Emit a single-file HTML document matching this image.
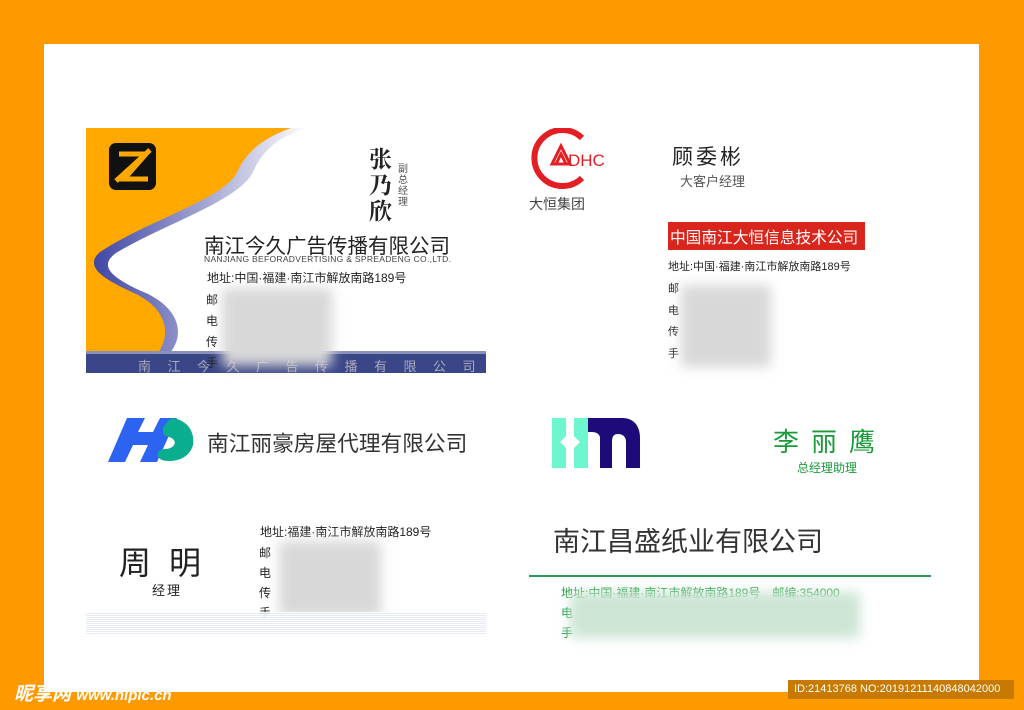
<!DOCTYPE html>
<html><head><meta charset="utf-8"><style>
*{margin:0;padding:0;box-sizing:border-box}
body{width:1024px;height:710px;background:#ff9900;position:relative;overflow:hidden;font-family:"Liberation Sans","Noto Sans CJK SC",sans-serif;color:#222}
.a{position:absolute;white-space:nowrap}
.blur{position:absolute;background:#d8d8d8;filter:blur(6px)}
</style></head><body>
<div class="a" style="left:44px;top:44px;width:935px;height:648px;background:#fff"></div>

<!-- card 1 -->
<svg class="a" style="left:86px;top:128px" width="400" height="245" viewBox="0 0 400 245">
<defs><linearGradient id="g" x1="0" x2="1"><stop offset="0" stop-color="#3a40a0"/><stop offset="1" stop-color="#fff"/></linearGradient></defs>
<path d="M0 0H222C195 8 178 20 168 42C156 72 80 95 30 125C12 138 25 150 60 165C92 180 100 205 84 225L0 225Z" fill="url(#g)"/>
<path d="M0 0H205C178 10 162 22 152 42C142 70 62 92 14 124C-2 138 15 150 48 165C80 180 86 205 72 225L0 225Z" fill="#ffa800"/>
<rect x="23" y="15" width="47" height="47" rx="7" fill="#111"/>
<path d="M33 26H60L38 51H62M30 53L64 22" stroke="#ffa800" stroke-width="5" fill="none"/>
<rect x="0" y="225" width="400" height="20" fill="#3a4688"/>
<rect x="0" y="223" width="400" height="3" fill="#8a90b8"/>
</svg>
<div class="a" style="left:138px;top:356px;font-size:13px;color:#aab;letter-spacing:16.5px">南江今久广告传播有限公司</div>
<div class="a" style="left:369px;top:145px;font-size:23px;font-family:'Noto Serif CJK SC',serif;font-weight:bold;line-height:26px;width:26px;white-space:normal">张乃欣</div>
<div class="a" style="left:398px;top:164px;font-size:10px;color:#555;line-height:11px;width:11px;white-space:normal">副总经理</div>
<div class="a" style="left:204px;top:229px;font-size:20.5px">南江今久广告传播有限公司</div>
<div class="a" style="left:204px;top:254px;font-size:8.5px;color:#444;letter-spacing:0.3px">NANJIANG BEFORADVERTISING &amp; SPREADENG CO.,LTD.</div>
<div class="a" style="left:207px;top:269px;font-size:12px">地址:中国·福建·南江市解放南路189号</div>
<div class="a" style="left:206px;top:290px;font-size:12px;line-height:21px;white-space:normal;width:20px">邮电传手</div>
<div class="blur" style="left:222px;top:288px;width:110px;height:78px"></div>

<!-- card 2 -->
<svg class="a" style="left:530px;top:128px" width="80" height="62" viewBox="0 0 80 62">
<path d="M52 10A28 28 0 1 0 52 50" stroke="#e31e24" stroke-width="6" fill="none"/>
<path d="M22 36L31 18L40 36Z M26 36L31 26L36 36" stroke="#e31e24" stroke-width="3" fill="none"/>
<text x="38" y="38" font-size="17" fill="#e31e24" font-family="Liberation Sans">DHC</text>
</svg>
<div class="a" style="left:529px;top:194px;font-size:14px;color:#444">大恒集团</div>
<div class="a" style="left:672px;top:141px;font-size:21px;letter-spacing:3px">顾委彬</div>
<div class="a" style="left:680px;top:171px;font-size:13px;color:#555">大客户经理</div>
<div class="a" style="left:668px;top:222px;width:197px;height:28px;background:#d9261c;color:#fff;font-size:15.7px;padding:3px 0 0 2px">中国南江大恒信息技术公司</div>
<div class="a" style="left:668px;top:258px;font-size:11px">地址:中国·福建·南江市解放南路189号</div>
<div class="a" style="left:668px;top:279px;font-size:11px;line-height:21.5px;white-space:normal;width:12px">邮电传手</div>
<div class="blur" style="left:681px;top:285px;width:90px;height:82px"></div>

<!-- card 3 -->
<svg class="a" style="left:107px;top:415px" width="90" height="48" viewBox="0 0 90 48">
<path d="M20 3H38L31 17H46L53 3H70L50 47H33L41 30H26L18 47H1Z" fill="#2c63f0"/>
<path d="M65 3C80 5 88 16 86 30C82 45 65 48 55 45C48 42 50 34 58 34C68 34 72 25 62 22C52 20 55 10 65 3Z" fill="#0aae8e"/>
</svg>
<div class="a" style="left:207px;top:427px;font-size:21.7px;color:#333">南江丽豪房屋代理有限公司</div>
<div class="a" style="left:119px;top:538px;font-size:32px;letter-spacing:18px;color:#222">周明</div>
<div class="a" style="left:152px;top:580px;font-size:13px;letter-spacing:2px">经理</div>
<div class="a" style="left:260px;top:523px;font-size:12px">地址:福建·南江市解放南路189号</div>
<div class="a" style="left:259px;top:543px;font-size:12px;line-height:20px;white-space:normal;width:14px;height:75px;overflow:hidden">邮电传手</div>
<div class="blur" style="left:279px;top:541px;width:102px;height:76px"></div>
<div class="a" style="left:86px;top:612px;width:400px;height:22px;background:repeating-linear-gradient(0deg,#e4e8f2 0 1px,#fff 1px 2px),#eef;opacity:.9"></div>

<!-- card 4 -->
<svg class="a" style="left:552px;top:416px" width="90" height="54" viewBox="0 0 90 54">
<path d="M0 2H14V20L8 26L14 32V52H0Z" fill="#6ef7cf"/>
<path d="M22 2H36V52H22V32L28 26L22 20Z" fill="#6ef7cf"/>
<path d="M36 2H70C82 2 88 10 88 22V52H74V26C74 20 70 18 66 18C62 18 60 20 60 26V52H48V22C48 18 44 16 40 16H36Z" fill="#1e0a78"/>
</svg>
<div class="a" style="left:773px;top:422px;font-size:26px;color:#1a9a3a;letter-spacing:12px">李丽鹰</div>
<div class="a" style="left:797px;top:459px;font-size:12px;color:#1a9a3a">总经理助理</div>
<div class="a" style="left:553px;top:520px;font-size:27px;color:#333">南江昌盛纸业有限公司</div>
<div class="a" style="left:529px;top:575px;width:402px;height:2px;background:#2a9a5a"></div>
<div class="a" style="left:561px;top:584px;font-size:12px;color:#1a9a3a">地址:中国·福建·南江市解放南路189号　邮编:354000</div>
<div class="a" style="left:561px;top:603px;font-size:12px;color:#1a9a3a;line-height:20px;white-space:normal;width:14px">电手</div>
<div class="blur" style="left:570px;top:592px;width:290px;height:46px;background:#cde5d5"></div>

<!-- watermark -->
<div class="a" style="left:14px;top:679px;font-size:19px;font-weight:bold;font-style:italic;color:#fff">昵享网 <span style="font-size:15px">www.nipic.cn</span></div>
<div class="a" style="left:788px;top:680px;width:226px;height:19px;background:#c87a00;color:#fff;font-size:11px;padding:3px 0 0 6px">ID:21413768 NO:20191211140848042000</div>
</body></html>
